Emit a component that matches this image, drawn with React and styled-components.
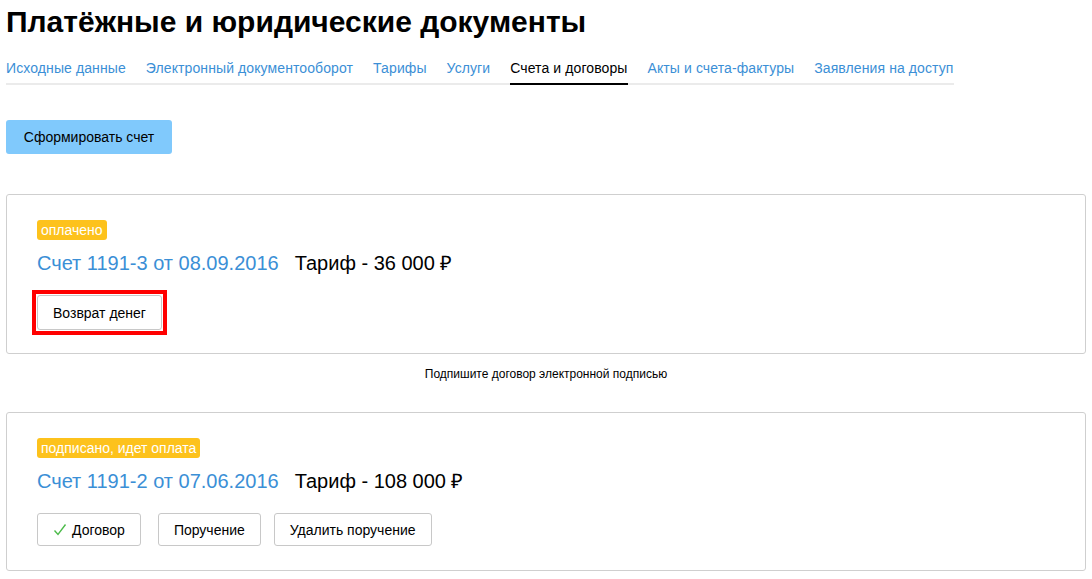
import styled, { createGlobalStyle } from "styled-components";

const GlobalStyle = createGlobalStyle`
  body {
    margin: 0;
    background: #fff;
    font-family: "Liberation Sans", Arial, sans-serif;
    color: #000;
  }
`;

const tabs = [
  "Исходные данные",
  "Электронный документооборот",
  "Тарифы",
  "Услуги",
  "Счета и договоры",
  "Акты и счета-фактуры",
  "Заявления на доступ",
];

const Check = () => (
  <svg width="14" height="14" viewBox="0 0 14 14">
    <polyline
      points="1.5,7.5 5,11.5 12.5,1.5"
      fill="none"
      stroke="#4cbb4a"
      strokeWidth="1.4"
    />
  </svg>
);

const App = () => {
  return (
    <Page>
      <GlobalStyle />
      <Title>Платёжные и юридические документы</Title>
      <Tabs>
        {tabs.map((t) => (
          <Tab key={t} $active={t === "Счета и договоры"}>
            {t}
          </Tab>
        ))}
      </Tabs>
      <PrimaryButton>Сформировать счет</PrimaryButton>

      <Card>
        <Badge>оплачено</Badge>
        <Heading>
          <Link>Счет 1191-3 от 08.09.2016</Link>
          <Price>Тариф - 36 000 ₽</Price>
        </Heading>
        <HighlightFrame>
          <Button $tall>Возврат денег</Button>
        </HighlightFrame>
      </Card>

      <Note>Подпишите договор электронной подписью</Note>

      <Card>
        <Badge>подписано, идет оплата</Badge>
        <Heading>
          <Link>Счет 1191-2 от 07.06.2016</Link>
          <Price>Тариф - 108 000 ₽</Price>
        </Heading>
        <Actions>
          <Button $gap={17}>
            <Check />
            Договор
          </Button>
          <Button $gap={13}>Поручение</Button>
          <Button>Удалить поручение</Button>
        </Actions>
      </Card>
    </Page>
  );
};

const Page = styled.div`
  padding: 0 6px;
  display: flex;
  flex-direction: column;
  align-items: flex-start;
`;

const Title = styled.h1`
  margin: 4px 0 0;
  font-size: 30px;
  line-height: 35px;
  font-weight: bold;
`;

const Tabs = styled.div`
  display: flex;
  gap: 20px;
  margin-top: 19px;
  border-bottom: 2px solid #ebebeb;
`;

const Tab = styled.div`
  font-size: 14px;
  line-height: 20px;
  letter-spacing: 0.1px;
  padding-bottom: 5px;
  margin-bottom: -2px;
  color: ${(p) => (p.$active ? "#000" : "#3b8fd6")};
  border-bottom: 2px solid ${(p) => (p.$active ? "#000" : "transparent")};
  cursor: pointer;
`;

const PrimaryButton = styled.button`
  margin-top: 35px;
  height: 34px;
  width: 166px;
  border: none;
  border-radius: 3px;
  background: #80c9fc;
  font-family: inherit;
  font-size: 14px;
  color: #000;
`;

const Card = styled.div`
  align-self: stretch;
  margin-top: 40px;
  padding: 25px 30px 24px;
  border: 1px solid #cfcfcf;
  border-radius: 3px;
  display: flex;
  flex-direction: column;
  align-items: flex-start;
`;

const Badge = styled.span`
  background: #fdc21c;
  color: #fff;
  font-size: 14px;
  line-height: 20px;
  padding: 0 4px;
  border-radius: 3px;
`;

const Heading = styled.div`
  margin-top: 8px;
  display: flex;
  gap: 16px;
  font-size: 20px;
  line-height: 30px;
`;

const Link = styled.span`
  color: #3b8fd6;
`;

const Price = styled.span`
  color: #000;
`;

const HighlightFrame = styled.div`
  margin: 12px 0 -6px -5px;
  padding: 1px;
  border: 4px solid #f00;
  display: flex;
`;

const Actions = styled.div`
  margin-top: 17px;
  display: flex;
`;

const Button = styled.button`
  height: ${(p) => (p.$tall ? 35 : 33)}px;
  padding: 0 15px;
  margin-right: ${(p) => p.$gap || 0}px;
  display: flex;
  align-items: center;
  gap: 5px;
  background: #fff;
  border: 1px solid #c8c8c8;
  border-radius: 3px;
  font-family: inherit;
  font-size: 14px;
  color: #000;
`;

const Note = styled.div`
  align-self: stretch;
  text-align: center;
  font-size: 12px;
  line-height: 16px;
  padding-top: 12px;
  margin-bottom: -10px;
`;

export default App;
